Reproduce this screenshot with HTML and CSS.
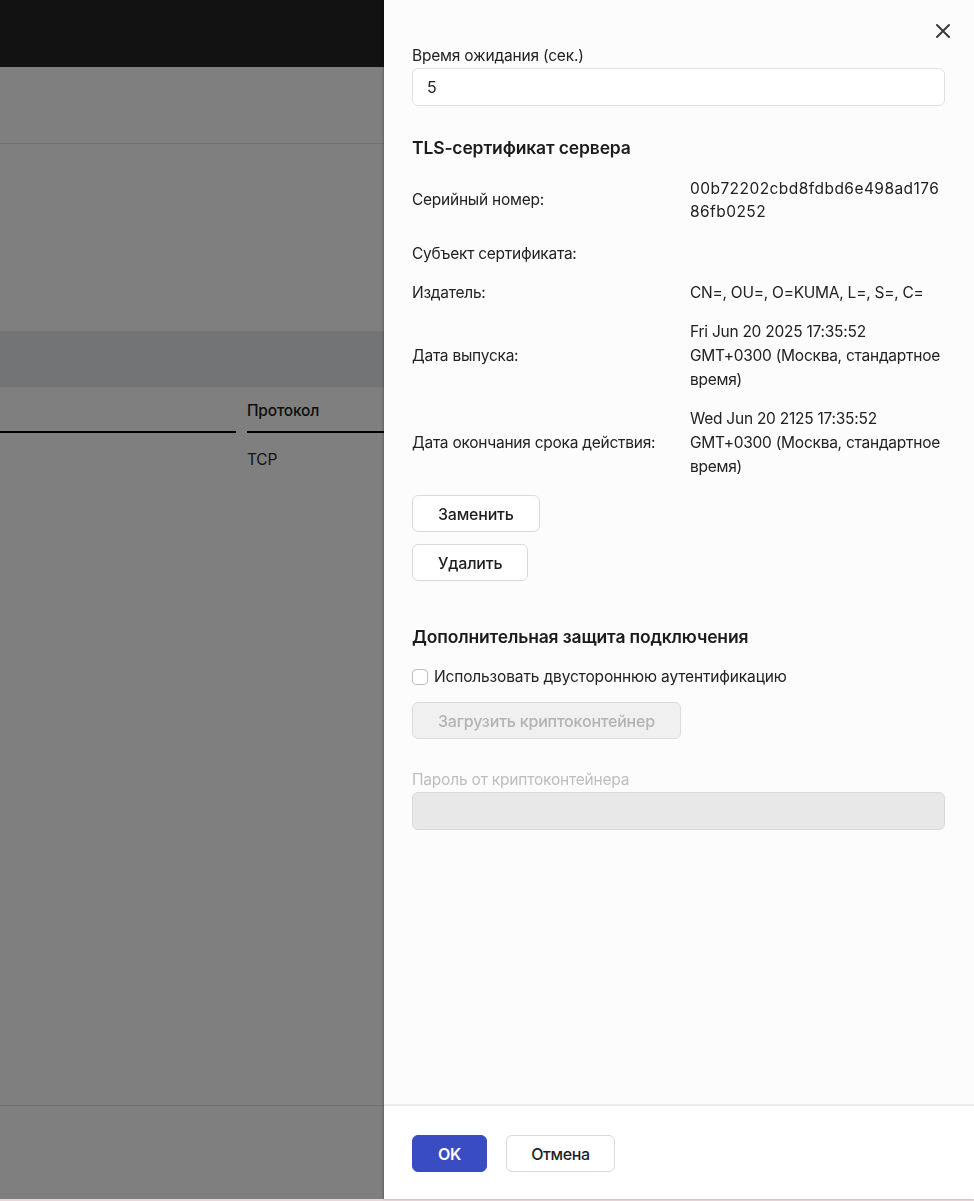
FILE: index.html
```html
<!DOCTYPE html>
<html lang="ru">
<head>
<meta charset="utf-8">
<title>Настройки</title>
<link rel="stylesheet" href="styles.css">
</head>
<body>
<div class="app">
  <div class="app-header"></div>
  <div class="app-toolbar"></div>
  <div class="app-space"></div>
  <div class="app-band"></div>
  <div class="app-table">
    <div class="th-row">
      <div class="th th-first"></div>
      <div class="th">Протокол</div>
    </div>
    <div class="td-row">
      <div class="td td-first"></div>
      <div class="td">TCP</div>
    </div>
  </div>
  <div class="app-fill"></div>
  <div class="app-footer"></div>
</div>
<div class="overlay"></div>
<aside class="panel">
  <div class="panel-body">
    <button class="close" aria-label="Закрыть">
      <svg width="16" height="16" viewBox="0 0 16 16"><path d="M2 2L14 14M14 2L2 14" stroke="#3a3a3a" stroke-width="2" stroke-linecap="round"/></svg>
    </button>
    <label class="field-label">Время ожидания (сек.)</label>
    <div class="input">5</div>

    <h2 class="section-title tls">TLS-сертификат сервера</h2>
    <div class="props">
      <div class="prop-label serial-row">Серийный номер:</div>
      <div class="prop-value serial serial-row"><span class="ln">00b72202cbd8fdbd6e498ad176</span><span class="ln">86fb0252</span></div>
      <div class="prop-label">Субъект сертификата:</div>
      <div class="prop-value"></div>
      <div class="prop-label">Издатель:</div>
      <div class="prop-value">CN=, OU=, O=KUMA, L=, S=, C=</div>
      <div class="prop-label">Дата выпуска:</div>
      <div class="prop-value"><span class="ln">Fri Jun 20 2025 17:35:52</span><span class="ln">GMT+0300 (Москва, стандартное</span><span class="ln">время)</span></div>
      <div class="prop-label">Дата окончания срока действия:</div>
      <div class="prop-value"><span class="ln">Wed Jun 20 2125 17:35:52</span><span class="ln">GMT+0300 (Москва, стандартное</span><span class="ln">время)</span></div>
    </div>
    <div class="btn-stack">
      <button class="btn">Заменить</button>
      <button class="btn">Удалить</button>
    </div>

    <h2 class="section-title extra">Дополнительная защита подключения</h2>
    <label class="check"><span class="box"></span>Использовать двустороннюю аутентификацию</label>
    <button class="btn btn-disabled">Загрузить криптоконтейнер</button>
    <label class="field-label disabled-label">Пароль от криптоконтейнера</label>
    <div class="input input-disabled"></div>
  </div>
  <div class="panel-footer">
    <button class="btn btn-primary">OK</button>
    <button class="btn btn-cancel">Отмена</button>
  </div>
</aside>
</body>
</html>
```
FILE: styles.css
```css
* { box-sizing: border-box; }
html, body { margin: 0; padding: 0; }
body {
  width: 974px;
  height: 1201px;
  overflow: hidden;
  font-family: Inter, "Noto Sans", "DejaVu Sans", sans-serif;
  color: #1f1f1f;
  background: #fff;
  border-bottom: 2px solid #e9d6d6;
}
.app {
  display: flex;
  flex-direction: column;
  height: 1199px;
  background: #ffffff;
}
.app-header { height: 67px; background: #242424; }
.app-toolbar { height: 77px; border-bottom: 1px solid #e2e2e2; }
.app-space { height: 187px; }
.app-band { height: 56px; background: #e6e8ea; }
.app-table { font-size: 15.5px; letter-spacing: -0.2px; }
.th-row, .td-row {
  display: grid;
  grid-template-columns: 236px 1fr;
  column-gap: 11px;
}
.th {
  height: 46px;
  display: flex;
  align-items: center;
  padding-top: 2px;
  border-bottom: 2px solid #000;
  font-weight: 500;
  color: #1a1a1a;
}
.td {
  height: 52px;
  display: flex;
  align-items: center;
  color: #2a2a2a;
}
.app-fill { flex: 1; border-bottom: 1px solid #e0e0e0; }
.app-footer { height: 93px; }

.overlay {
  position: fixed;
  inset: 0 0 2px 0;
  background: rgba(0, 0, 0, 0.5);
}

.panel {
  position: fixed;
  top: 0;
  right: 0;
  bottom: 2px;
  width: 590px;
  display: flex;
  flex-direction: column;
  background: #fcfcfc;
  box-shadow: -1px 0 2px rgba(0, 0, 0, 0.25);
}
.panel-body {
  position: relative;
  flex: 1;
  padding: 44px 29px 0 28px;
  display: flex;
  flex-direction: column;
  align-items: flex-start;
}
.close {
  position: absolute;
  top: 23px;
  right: 23px;
  width: 16px;
  height: 16px;
  padding: 0;
  border: 0;
  background: none;
  display: flex;
}
.field-label {
  font-size: 15.5px;
  line-height: 24px;
  color: #222;
  letter-spacing: -0.2px;
}
.input {
  align-self: stretch;
  height: 38px;
  border: 1px solid #dde1e6;
  border-radius: 6px;
  background: #fff;
  padding: 0 14px;
  display: flex;
  align-items: center;
  font-size: 16px;
  color: #222;
}
.section-title {
  margin: 0;
  font-size: 17.5px;
  line-height: 24px;
  font-weight: 600;
  color: #1b1b1b;
  letter-spacing: -0.15px;
}
.section-title.tls { margin-top: 30px; }
.section-title.extra { margin-top: 44px; }
.props {
  align-self: stretch;
  margin-top: 17px;
  display: grid;
  grid-template-columns: 278px 1fr;
  row-gap: 15px;
  font-size: 15.5px;
  line-height: 24px;
  color: #222;
  letter-spacing: -0.25px;
}
.prop-label { align-self: center; }
.prop-value { min-height: 24px; }
.ln { display: block; white-space: nowrap; }
.serial { letter-spacing: 0.45px; line-height: 23px; }
.serial-row { margin-bottom: 4px; }
.btn-stack {
  margin-top: 16px;
  display: flex;
  flex-direction: column;
  align-items: flex-start;
  gap: 12px;
}
.btn {
  height: 37px;
  padding: 0 25px;
  border: 1px solid #d6d9de;
  border-radius: 6px;
  background: #fff;
  font-family: inherit;
  font-size: 16px;
  font-weight: 500;
  color: #1f1f1f;
  letter-spacing: -0.2px;
}
.check {
  margin-top: 16px;
  display: flex;
  align-items: center;
  gap: 6px;
  font-size: 15.5px;
  line-height: 24px;
  color: #222;
  letter-spacing: -0.15px;
}
.box {
  width: 16px;
  height: 16px;
  border: 1px solid #b9bec5;
  border-radius: 4px;
  background: #fff;
}
.btn-disabled {
  margin-top: 13px;
  background: #f0f0f0;
  border-color: #dcdcdc;
  color: #b3b3b3;
}
.disabled-label {
  margin-top: 29px;
  color: #bdbdbd;
}
.input-disabled {
  background: #e8e8e8;
  border-color: #d9d9d9;
}
.panel-footer {
  height: 95px;
  border-top: 2px solid #ebebeb;
  background: #fff;
  padding: 29px 28px 0;
  display: flex;
  align-items: flex-start;
  gap: 19px;
}
.btn-primary {
  background: #3a4cc1;
  border-color: #3a4cc1;
  color: #fff;
  font-weight: 600;
  padding: 0 25px;
}
.btn-cancel { padding: 0 24px; letter-spacing: -0.4px; }
```
